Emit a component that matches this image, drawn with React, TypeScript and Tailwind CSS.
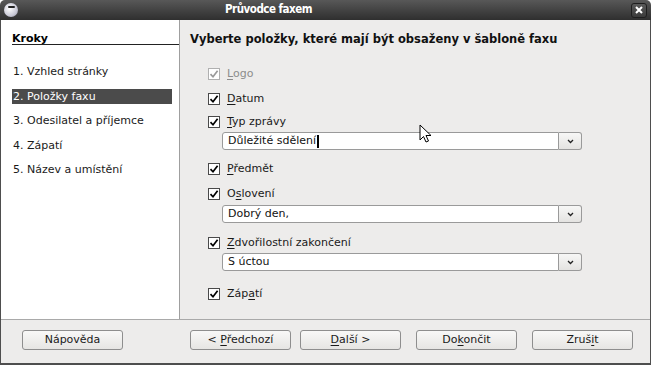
import React from "react";

const font = { fontFamily: '"DejaVu Sans", "Noto Sans", sans-serif' };

function Check({ disabled }: { disabled?: boolean }) {
  return (
    <div
      className={
        "w-[12px] h-[12px] border bg-white flex items-center justify-center shrink-0 " +
        (disabled ? "border-[#b0b0b0]" : "border-[#4a4a4a]")
      }
    >
      <svg width="10" height="10" viewBox="0 0 10 10">
        <path
          d="M1.5 5.2 L4 7.8 L8.6 1.8"
          fill="none"
          stroke={disabled ? "#9a9a9a" : "#000"}
          strokeWidth="1.7"
        />
      </svg>
    </div>
  );
}

function Row({
  children,
  disabled,
  className,
}: {
  children: React.ReactNode;
  disabled?: boolean;
  className?: string;
}) {
  return (
    <div className={"h-[16px] flex items-center gap-[7px] " + (className || "")}>
      <Check disabled={disabled} />
      <span
        className={
          "text-[11px] leading-[16px] " +
          (disabled ? "text-[#8c8c8c]" : "text-[#1a1a1a]")
        }
      >
        {children}
      </span>
    </div>
  );
}

function U({ children }: { children: React.ReactNode }) {
  return <span className="underline underline-offset-[2px]">{children}</span>;
}

function Combo({
  value,
  caret,
  className,
}: {
  value: string;
  caret?: boolean;
  className?: string;
}) {
  return (
    <div className={"ml-[14px] w-[360px] h-[18px] flex " + (className || "")}>
      <div className="flex-1 bg-white border border-[#9a9a9a] rounded-l-[3px] flex items-center pl-[5px] text-[11px] text-[#111]">
        <span>{value}</span>
        {caret && <span className="inline-block w-[2px] h-[13px] bg-black ml-[1px]" />}
      </div>
      <div className="w-[23px] border border-l-0 border-[#9a9a9a] rounded-r-[3px] bg-gradient-to-b from-[#f7f7f6] to-[#e4e3e1] flex items-center justify-center">
        <svg width="7" height="5" viewBox="0 0 7 5">
          <path d="M1 1 L3.5 3.5 L6 1" fill="none" stroke="#222" strokeWidth="1.3" />
        </svg>
      </div>
    </div>
  );
}

function Btn({ children, className }: { children: React.ReactNode; className?: string }) {
  return (
    <div
      className={
        "w-[101px] h-[20px] border border-[#8e8e8e] rounded-[3px] bg-gradient-to-b from-[#f8f8f7] to-[#e6e5e3] flex items-center justify-center text-[11px] text-[#1a1a1a] " +
        (className || "")
      }
    >
      <span className="whitespace-pre">{children}</span>
    </div>
  );
}

export default function App() {
  return (
    <div className="w-[651px] h-[365px] bg-white relative" style={font}>
      {/* title bar */}
      <div className="h-[20px] rounded-t-[5px] bg-gradient-to-b from-[#585858] to-[#2f2f2f] flex items-center relative">
        <div className="ml-[4px] w-[14px] h-[14px] rounded-full bg-[radial-gradient(circle_at_40%_40%,#ffffff,#c9c9d6_60%,#8a8a9a)] flex items-start justify-center pt-[3px]">
          <div className="w-[7px] h-[2px] bg-[#222] rounded-[1px]" />
        </div>
        <div
          className="ml-[207px] text-white font-bold text-[11.5px] tracking-[-0.5px]"
          style={{ fontFamily: '"DejaVu Sans Condensed", "DejaVu Sans", sans-serif' }}
        >
          Průvodce faxem
        </div>
        <div className="ml-auto mr-[4px] w-[16px] h-[15px] rounded-[3px] border border-[#1e1e1e] bg-gradient-to-b from-[#5a5a5a] to-[#3a3a3a] flex items-center justify-center">
          <svg width="10" height="10" viewBox="0 0 10 10">
            <path d="M2 2 L8 8 M8 2 L2 8" stroke="#fff" strokeWidth="2" />
          </svg>
        </div>
      </div>

      {/* body */}
      <div className="h-[345px] bg-[#edeceb] border-x border-b-2 border-[#4e4e4e] flex flex-col">
        <div className="h-[299px] flex">
          {/* left steps */}
          <div className="w-[179px] bg-white border-r border-[#9f9f9f] pl-[11px] pt-[13px]">
            <div className="h-[11px] leading-[11px] text-[11px] font-bold text-black border-b border-[#222] box-content">
              Kroky
            </div>
            <div className="mt-[19px] flex flex-col gap-[9.5px] text-[11px] text-[#1a1a1a] pr-[7px]">
              <div className="h-[15px] leading-[15px] pl-[1px]">1. Vzhled stránky</div>
              <div className="h-[15px] leading-[15px] pl-[1px] bg-[#4b4b4b] text-white">2. Položky faxu</div>
              <div className="h-[15px] leading-[15px] pl-[1px]">3. Odesilatel a příjemce</div>
              <div className="h-[15px] leading-[15px] pl-[1px]">4. Zápatí</div>
              <div className="h-[15px] leading-[15px] pl-[1px]">5. Název a umístění</div>
            </div>
          </div>

          {/* right content */}
          <div className="flex-1 pl-[10px] pt-[12px]">
            <div className="h-[15px] leading-[15px] text-[11.5px] font-bold text-[#111]">
              Vyberte položky, které mají být obsaženy v šabloně faxu
            </div>
            <div className="ml-[18px] flex flex-col">
              <Row disabled className="mt-[19px]">
                <U>L</U>ogo
              </Row>
              <Row className="mt-[9px]">
                <U>D</U>atum
              </Row>
              <Row className="mt-[7px]">
                <U>T</U>yp zprávy
              </Row>
              <Combo className="mt-[2px]" value="Důležité sdělení" caret />
              <Row className="mt-[11px]">
                <U>P</U>ředmět
              </Row>
              <Row className="mt-[9px]">
                O<U>s</U>lovení
              </Row>
              <Combo className="mt-[3px]" value="Dobrý den," />
              <Row className="mt-[12px]">
                <U>Z</U>dvořilostní zakončení
              </Row>
              <Combo className="mt-[2px]" value="S úctou" />
              <Row className="mt-[15px]">
                Záp<U>a</U>tí
              </Row>
            </div>
          </div>
        </div>

        {/* separator */}
        <div className="h-[1px] bg-[#a9a9a9]" />

        {/* buttons */}
        <div className="flex-1 flex items-start pt-[10px] pl-[21px] pr-[17px]">
          <Btn>Nápověda</Btn>
          <div className="flex-1" />
          <Btn>
            {"< "}
            <U>P</U>ředchozí
          </Btn>
          <Btn className="ml-[9px]">
            <U>D</U>
            {"alší >"}
          </Btn>
          <Btn className="ml-[15px]">
            Do<U>k</U>ončit
          </Btn>
          <Btn className="ml-[15px]">
            Zruš<U>i</U>t
          </Btn>
        </div>
      </div>

      {/* mouse pointer overlay */}
      <svg
        className="absolute left-[419px] top-[124px]"
        width="13"
        height="20"
        viewBox="0 0 13 20"
      >
        <path
          d="M1 1 L1 16 L4.5 12.5 L7 18 L9.5 17 L7 11.5 L12 11.5 Z"
          fill="#fff"
          stroke="#000"
          strokeWidth="1"
          strokeLinejoin="round"
        />
      </svg>
    </div>
  );
}
